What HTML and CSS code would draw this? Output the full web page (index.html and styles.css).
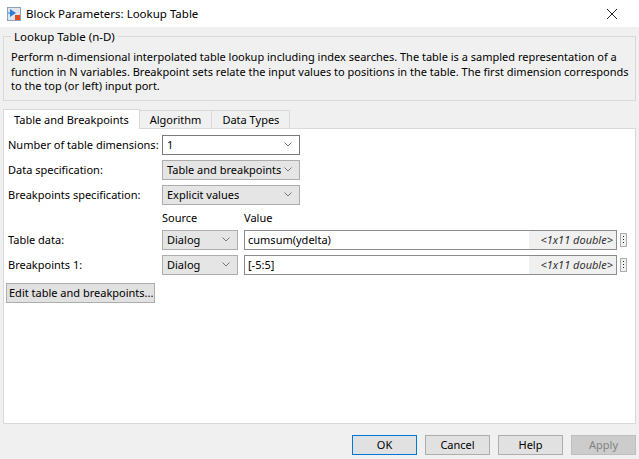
FILE: index.html
```html
<!DOCTYPE html>
<html>
<head>
<meta charset="utf-8">
<link rel="stylesheet" href="styles.css">
</head>
<body>
<div class="window">
  <div class="titlebar">
    <svg class="appicon" width="14" height="14" viewBox="0 0 14 14">
      <rect x="0.5" y="0.5" width="13" height="13" fill="#dfe6ee" stroke="#8ea2b8"/>
      <path d="M3 2 L3 10 L9 6 Z" fill="#2f7fd0"/>
      <path d="M1 6 L3 6" stroke="#2f7fd0" stroke-width="1"/>
      <rect x="8" y="8" width="5" height="5" fill="#e24a1f"/>
    </svg>
    <span class="title">Block Parameters: Lookup Table</span>
    <svg class="close" width="12" height="12" viewBox="0 0 12 12">
      <path d="M1 1 L11 11 M11 1 L1 11" stroke="#222" stroke-width="1"/>
    </svg>
  </div>
  <div class="content">
    <fieldset class="group">
      <legend>Lookup Table (n-D)</legend>
      <p class="desc">Perform n-dimensional interpolated table lookup including index searches. The table is a sampled representation of a<br>function in N variables. Breakpoint sets relate the input values to positions in the table. The first dimension corresponds<br>to the top (or left) input port.</p>
    </fieldset>
    <div class="tabs">
      <div class="tab active">Table and Breakpoints</div>
      <div class="tab">Algorithm</div>
      <div class="tab">Data Types</div>
    </div>
    <div class="panel">
      <div class="row">
        <span class="label">Number of table dimensions:</span>
        <div class="combo white wide"><span>1</span><svg class="chev" width="8" height="5" viewBox="0 0 8 5"><path d="M0.5 0.5 L4 4 L7.5 0.5" fill="none" stroke="#777"/></svg></div>
      </div>
      <div class="row">
        <span class="label">Data specification:</span>
        <div class="combo wide"><span>Table and breakpoints</span><svg class="chev" width="8" height="5" viewBox="0 0 8 5"><path d="M0.5 0.5 L4 4 L7.5 0.5" fill="none" stroke="#777"/></svg></div>
      </div>
      <div class="row">
        <span class="label">Breakpoints specification:</span>
        <div class="combo wide"><span>Explicit values</span><svg class="chev" width="8" height="5" viewBox="0 0 8 5"><path d="M0.5 0.5 L4 4 L7.5 0.5" fill="none" stroke="#777"/></svg></div>
      </div>
      <div class="row headers">
        <span class="label"></span>
        <span class="src-head">Source</span>
        <span class="val-head">Value</span>
      </div>
      <div class="row">
        <span class="label">Table data:</span>
        <div class="combo narrow"><span>Dialog</span><svg class="chev" width="8" height="5" viewBox="0 0 8 5"><path d="M0.5 0.5 L4 4 L7.5 0.5" fill="none" stroke="#777"/></svg></div>
        <div class="edit"><span class="val">cumsum(ydelta)</span><span class="info">&lt;1x11 double&gt;</span></div>
        <div class="more"><i></i><i></i><i></i></div>
      </div>
      <div class="row">
        <span class="label">Breakpoints 1:</span>
        <div class="combo narrow"><span>Dialog</span><svg class="chev" width="8" height="5" viewBox="0 0 8 5"><path d="M0.5 0.5 L4 4 L7.5 0.5" fill="none" stroke="#777"/></svg></div>
        <div class="edit"><span class="val">[-5:5]</span><span class="info">&lt;1x11 double&gt;</span></div>
        <div class="more"><i></i><i></i><i></i></div>
      </div>
      <div class="editbtn">Edit table and breakpoints...</div>
    </div>
    <div class="buttons">
      <div class="btn default">OK</div>
      <div class="btn">Cancel</div>
      <div class="btn">Help</div>
      <div class="btn disabled">Apply</div>
    </div>
  </div>
</div>
</body>
</html>
```
FILE: styles.css
```css
* { box-sizing: border-box; }
html, body { margin: 0; padding: 0; }
body {
  font-family: "Noto Sans", "Open Sans", sans-serif;
  font-size: 11px;
  color: #000;
  background: #f0f0f0;
  width: 639px;
  height: 459px;
  overflow: hidden;
}
.window { width: 639px; height: 459px; display: flex; flex-direction: column; }
.titlebar {
  height: 27px;
  background: #fff;
  display: flex;
  align-items: center;
  padding-left: 7px;
}
.appicon { flex: none; }
.title { margin-left: 5px; font-size: 11.5px; color: #000; }
.close { margin-left: auto; margin-right: 21px; }
.content { flex: 1; padding: 0 3px; display: flex; flex-direction: column; }
.group {
  margin: 2px 0 0;
  border: 1px solid #d9d9d9;
  padding: 0 7px 6px;
  min-width: 0;
}
.group legend {
  padding: 0 3px;
  margin-left: 0;
  line-height: 15px;
  font-size: 11.5px;
}
.desc {
  margin: 6px 0 0;
  line-height: 14.5px;
  white-space: nowrap;
}
.tabs { display: flex; margin-top: 7px; height: 20px; align-items: flex-end; }
.tab {
  height: 18px;
  line-height: 17px;
  padding: 0 10px;
  border: 1px solid #d9d9d9;
  border-bottom: none;
  border-left: none;
  background: #f0f0f0;
}
.tab.active {
  height: 20px;
  line-height: 20px;
  background: #fff;
  border-left: 1px solid #d9d9d9;
  position: relative;
  top: 1px;
}
.panel {
  height: 296px;
  background: #fff;
  border: 1px solid #d9d9d9;
  padding: 6px 4px 0;
  display: flex;
  flex-direction: column;
}
.row { display: flex; align-items: center; height: 20px; margin-bottom: 5px; flex: none; }
.label { width: 154px; flex: none; }
.combo {
  height: 20px;
  display: flex;
  align-items: center;
  padding: 0 7px 0 4px;
  background: #e5e5e5;
  border: 1px solid #adadad;
  flex: none;
}
.combo.white { background: #fff; border-color: #7a7a7a; }
.combo.wide { width: 138px; }
.combo.narrow { width: 76px; }
.combo .chev { margin-left: auto; }
.row.headers { height: 15px; margin-bottom: 5px; }
.src-head { width: 82px; }
.edit {
  margin-left: 6px;
  width: 373px;
  height: 20px;
  border: 1px solid #8c8c8c;
  display: flex;
  align-items: stretch;
  background: #fff;
}
.edit .val { padding-left: 3px; display: flex; align-items: center; }
.edit .info {
  margin-left: auto;
  width: 87px;
  background: #f0f0f0;
  font-style: italic;
  color: #333;
  display: flex;
  align-items: center;
  justify-content: flex-end;
  padding-right: 3px;
}
.more {
  margin-left: 3px;
  width: 7px;
  height: 14px;
  border: 1px solid #adadad;
  background: #f0f0f0;
  display: flex;
  flex-direction: column;
  align-items: center;
  justify-content: center;
  gap: 2px;
}
.more i { width: 1px; height: 1px; background: #222; display: block; }
.editbtn {
  margin-top: 3px;
  margin-left: -2px;
  width: 149px;
  height: 20px;
  line-height: 18px;
  padding-left: 2px;
  background: #e1e1e1;
  border: 1px solid #adadad;
  white-space: nowrap;
  flex: none;
}
.buttons { display: flex; justify-content: flex-end; gap: 8px; margin-top: 11px; padding-right: 0; }
.btn {
  width: 65px;
  height: 20px;
  line-height: 18px;
  text-align: center;
  background: #e1e1e1;
  border: 1px solid #adadad;
}
.btn.default { border-color: #0078d7; }
.btn.disabled { background: #cccccc; border-color: #bfbfbf; color: #838383; }
```
